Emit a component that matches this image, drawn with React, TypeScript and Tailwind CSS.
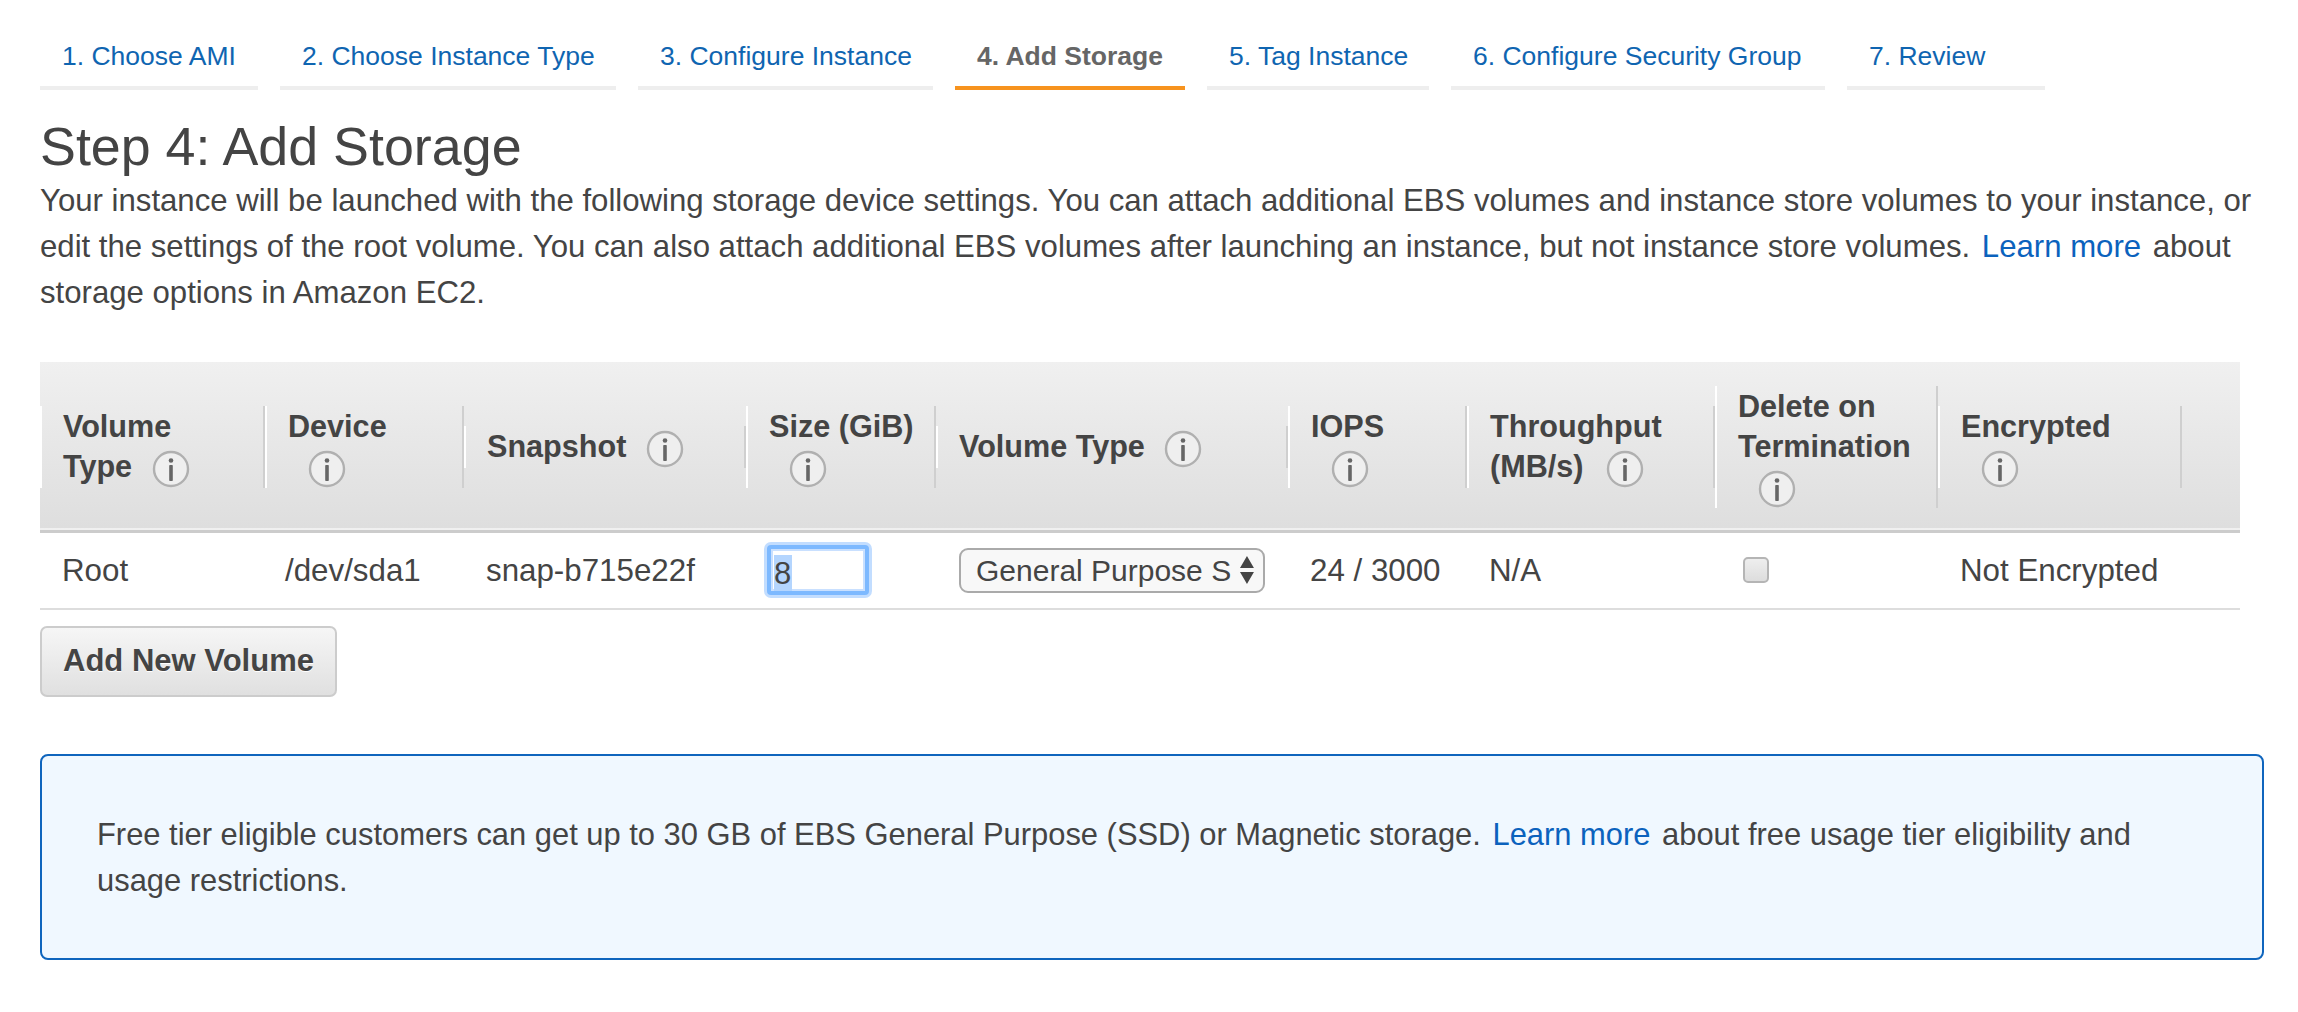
import type { ReactNode } from "react";

const tabs = [
    { label: "1. Choose AMI", width: "w-[218px]" },
    { label: "2. Choose Instance Type", width: "w-[336px]" },
    { label: "3. Configure Instance", width: "w-[295px]" },
    { label: "4. Add Storage", width: "w-[230px]", active: true },
    { label: "5. Tag Instance", width: "w-[222px]" },
    { label: "6. Configure Security Group", width: "w-[374px]" },
    { label: "7. Review", width: "w-[198px]" },
];

function InfoIcon({ className = "ml-[11px]" }: { className?: string }) {
    return (
        <svg viewBox="0 0 38 38" className={"inline-block h-[38px] w-[38px] align-middle " + className}>
            <circle cx="19" cy="19" r="17" fill="#efefef" stroke="#b0b0b0" strokeWidth="2.4" />
            <circle cx="19" cy="10.5" r="2.3" fill="#666" />
            <rect x="17.2" y="15" width="3.6" height="16" rx="0.8" fill="#666" />
        </svg>
    );
}

function HeadCell({ children }: { children: ReactNode }) {
    return (
        <th className="p-0 pt-[3px] text-left align-middle font-bold">
            <div className="border-r-2 border-l-2 border-r-[#cfcfcf] border-l-white pl-[21px] text-[30.6px] leading-[40px] text-[#444]">
                {children}
            </div>
        </th>
    );
}

function BodyCell({ children }: { children: ReactNode }) {
    return <td className="pl-[22px] pt-[2px] align-middle text-[31.3px] text-[#444]">{children}</td>;
}

export default function App() {
    return (
        <div className="min-h-[1012px] bg-white pl-10 pt-[32px] font-['Liberation_Sans',Arial,sans-serif] text-[#444]">
            <div className="flex gap-[22px]">
                {tabs.map((tab) => (
                    <div
                        key={tab.label}
                        className={
                            tab.active
                                ? "h-[58px] border-b-4 border-[#f7931e] pl-[22px] pt-[5px] text-[26.5px] font-bold text-[#666] " + tab.width
                                : "h-[58px] border-b-4 border-[#eeeeee] pl-[22px] pt-[5px] text-[26.5px] text-[#0f65b1] " + tab.width
                        }
                    >
                        {tab.label}
                    </div>
                ))}
            </div>

            <h1 className="mt-[24px] text-[53.8px] leading-[64px]">Step 4: Add Storage</h1>

            <p className="text-[31.15px] leading-[46px]">
                Your instance will be launched with the following storage device settings. You can attach additional EBS volumes and instance store volumes to your instance, or
                <br />
                edit the settings of the root volume. You can also attach additional EBS volumes after launching an instance, but not instance store volumes.{" "}
                <a className="mx-[3px] text-[#0b62bd]">Learn more</a> about
                <br />
                storage options in Amazon EC2.
            </p>

            <table className="mt-[46px] w-[2200px] table-fixed border-collapse">
                <colgroup>
                    <col className="w-[225px]" />
                    <col className="w-[199px]" />
                    <col className="w-[282px]" />
                    <col className="w-[190px]" />
                    <col className="w-[352px]" />
                    <col className="w-[179px]" />
                    <col className="w-[248px]" />
                    <col className="w-[223px]" />
                    <col className="w-[244px]" />
                    <col className="w-[58px]" />
                </colgroup>
                <thead>
                    <tr className="h-[169px] border-b-[3px] border-[#cccccc] bg-gradient-to-b from-[#f0f0f0] to-[#dedede]">
                        <HeadCell>Volume<br />Type <InfoIcon /></HeadCell>
                        <HeadCell>Device<br /><InfoIcon className="ml-[20px]" /></HeadCell>
                        <HeadCell>Snapshot <InfoIcon /></HeadCell>
                        <HeadCell>Size (GiB)<br /><InfoIcon className="ml-[20px]" /></HeadCell>
                        <HeadCell>Volume Type <InfoIcon /></HeadCell>
                        <HeadCell>IOPS<br /><InfoIcon className="ml-[20px]" /></HeadCell>
                        <HeadCell>Throughput<br />(MB/s) <InfoIcon className="ml-[14px]" /></HeadCell>
                        <HeadCell>Delete on<br />Termination<br /><InfoIcon className="ml-[20px]" /></HeadCell>
                        <HeadCell>Encrypted<br /><InfoIcon className="ml-[20px]" /></HeadCell>
                        <th className="p-0" />
                    </tr>
                </thead>
                <tbody>
                    <tr className="h-[78px] border-b-2 border-[#dddddd]">
                        <BodyCell>Root</BodyCell>
                        <td className="pl-[20px] pt-[2px] align-middle text-[31.3px] text-[#444]">/dev/sda1</td>
                        <BodyCell>snap-b715e22f</BodyCell>
                        <td className="pl-[18px] align-middle">
                            <div className="h-[56px] w-[108px] rounded-[7px] border-[3px] border-[#c2ddff] bg-[#7db9ff] p-[4px]">
                                <div className="h-full border-2 border-[#c9e0ff] bg-white text-[31px]">
                                    <span className="ml-px inline-block h-[36px] bg-[#b4d5fe] pr-px leading-[37px]">8</span>
                                </div>
                            </div>
                        </td>
                        <td className="pl-[23px] align-middle">
                            <div className="flex h-[45px] w-[306px] items-center rounded-[9px] border-2 border-[#aaaaaa] bg-[#f8f8f8] pl-[15px] pr-[8px] text-[30px]">
                                <span className="w-[258px] whitespace-nowrap">General Purpose S</span>
                                <svg viewBox="0 0 16 28" className="ml-[6px] h-[28px] w-[16px]">
                                    <path d="M8 0 L15 12 L1 12 Z M1 16 L15 16 L8 28 Z" fill="#444" />
                                </svg>
                            </div>
                        </td>
                        <BodyCell>24 / 3000</BodyCell>
                        <BodyCell>N/A</BodyCell>
                        <td className="pl-[28px] align-middle">
                            <div className="h-[26px] w-[26px] rounded-[5px] border-2 border-[#b5b5b5] bg-gradient-to-b from-[#eeeeee] to-[#dddddd]" />
                        </td>
                        <BodyCell>Not Encrypted</BodyCell>
                        <td />
                    </tr>
                </tbody>
            </table>

            <button className="mt-[16px] block h-[71px] w-[297px] rounded-[7px] border-2 border-[#cccccc] bg-gradient-to-b from-[#f6f6f6] to-[#e0e0e0] text-center text-[31px] font-bold text-[#444] [text-shadow:0_1px_0_#fff]">
                Add New Volume
            </button>

            <div className="mt-[57px] h-[206px] w-[2224px] rounded-[8px] border-2 border-[#0f65bd] bg-[#f0f8ff] pl-[55px] pt-[56px] text-[30.9px] leading-[46px]">
                Free tier eligible customers can get up to 30 GB of EBS General Purpose (SSD) or Magnetic storage.{" "}
                <a className="mx-[3px] text-[#0b62bd]">Learn more</a> about free usage tier eligibility and
                <br />
                usage restrictions.
            </div>
        </div>
    );
}
